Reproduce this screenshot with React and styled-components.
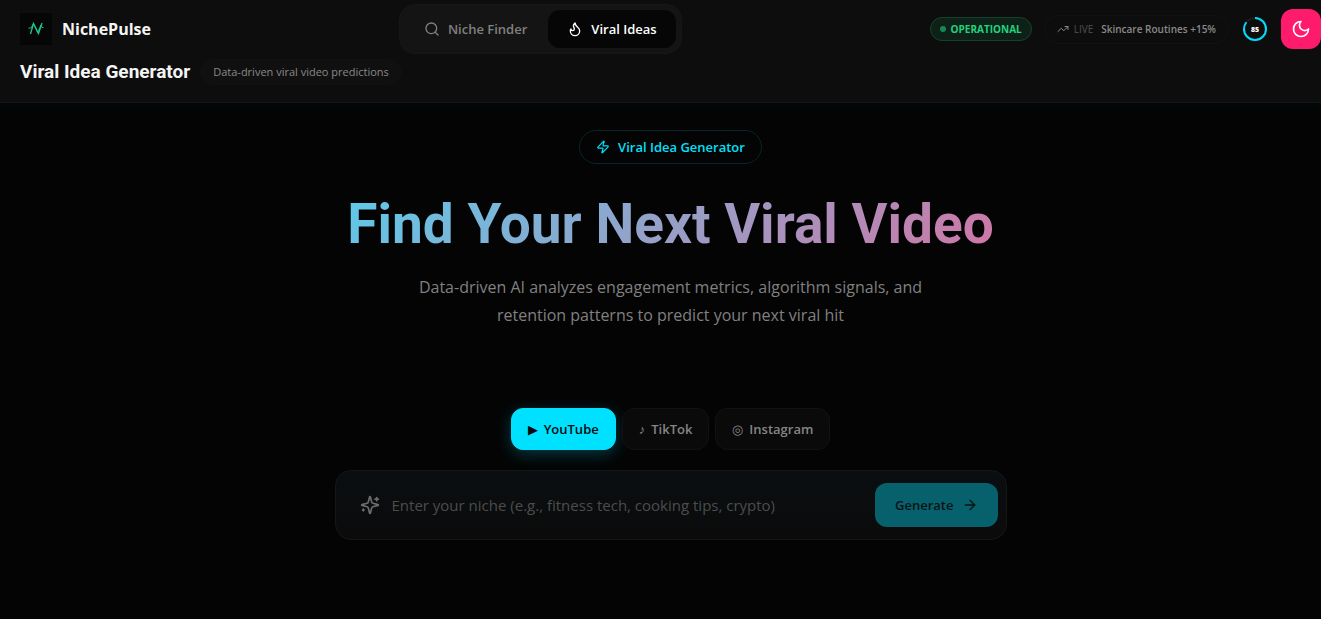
import React, { useState } from "react";
import styled, { createGlobalStyle } from "styled-components";
import { ArrowRight, Search, TrendingUp, Zap } from "lucide-react";

const sans = `"Open Sans", "Noto Sans", sans-serif`;
const display = `Roboto, "Liberation Sans", sans-serif`;

const GlobalStyle = createGlobalStyle`
  * { box-sizing: border-box; }
  body {
    margin: 0;
    background: #040404;
    color: #f5f5f5;
    font-family: ${sans};
    font-size: 13px;
  }
  button, input { font-family: inherit; }
`;

const Header = styled.header`
  background: #0d0d0d;
  border-bottom: 1px solid #141414;
  padding: 4px 0 16px 20px;
`;
const TopBar = styled.div`
  display: flex;
  align-items: center;
  justify-content: space-between;
  min-height: 50px;
`;
const Brand = styled.a`
  display: flex;
  align-items: center;
  gap: 10px;
  color: #f5f5f5;
  font-size: 16px;
  font-weight: 700;
  text-decoration: none;
`;
const LogoBox = styled.span`
  display: grid;
  place-items: center;
  width: 32px;
  height: 32px;
  background: #060606;
`;

const Tabs = styled.nav`
  display: flex;
  gap: 2px;
  padding: 5px;
  background: #141414;
  border: 1px solid #171717;
  border-radius: 16px;
`;
const Tab = styled.button`
  display: flex;
  align-items: center;
  gap: 8px;
  height: 38px;
  padding: 0 19px;
  border: 0;
  border-radius: 12px;
  background: ${p => (p.$active ? "#060606" : "transparent")};
  color: ${p => (p.$active ? "#ffffff" : "#808080")};
  font-size: 13px;
  font-weight: 600;
  cursor: pointer;
`;

const Status = styled.div`
  display: flex;
  align-items: center;
  gap: 12px;
`;
const Operational = styled.span`
  display: flex;
  align-items: center;
  gap: 5px;
  height: 24px;
  padding: 0 9px;
  border: 1px solid #14432c;
  border-radius: 12px;
  background: #0e2119;
  color: #22d37c;
  font-size: 10px;
  font-weight: 700;
`;
const Dot = styled.span`
  width: 6px;
  height: 6px;
  border-radius: 50%;
  background: #198754;
`;
const Ticker = styled.div`
  display: flex;
  align-items: center;
  gap: 5px;
  height: 29px;
  padding: 0 12px;
  border: 1px solid #121212;
  border-radius: 15px;
  color: #8a8a8a;
  font-size: 10px;
  font-weight: 600;
`;
const Live = styled.span`
  margin-right: 3px;
  color: #505050;
  font-weight: 400;
`;
const Score = styled.svg`
  display: block;
  margin: 0 2px;
`;
const ThemeButton = styled.button`
  display: grid;
  place-items: center;
  width: 40px;
  height: 40px;
  padding: 0;
  border: 0;
  border-radius: 12px;
  background: #ff1b6b;
  color: #ffffff;
  cursor: pointer;
`;

const TitleBar = styled.div`
  display: flex;
  align-items: center;
  gap: 10px;
  margin-top: 4px;
`;
const PageTitle = styled.h2`
  margin: 0;
  font-family: ${display};
  font-size: 19px;
  font-weight: 700;
  line-height: 28px;
`;
const Subtitle = styled.span`
  padding: 0 12px;
  border: 1px solid #111111;
  border-radius: 14px;
  background: #101010;
  color: #8a8a8a;
  font-size: 11px;
  line-height: 24px;
`;

const Main = styled.main`
  display: flex;
  flex-direction: column;
  align-items: center;
  padding: 27px 0 40px 20px;
  background: linear-gradient(180deg, #020708 0, #040404 12px);
`;
const Badge = styled.span`
  display: flex;
  align-items: center;
  gap: 8px;
  height: 34px;
  padding: 0 16px;
  border: 1px solid #042629;
  border-radius: 17px;
  color: #00e0fb;
  font-size: 13px;
  font-weight: 600;
`;
const Headline = styled.h1`
  margin: 29px 0 0;
  background: linear-gradient(135deg, #5fc9e8 0%, #cf76a6 100%);
  background-clip: text;
  -webkit-background-clip: text;
  color: transparent;
  font-family: ${display};
  font-size: 55px;
  font-weight: 700;
  line-height: 62px;
  text-align: center;
`;
const Lead = styled.p`
  max-width: 536px;
  margin: 18px 0 0;
  color: #808080;
  font-size: 16px;
  line-height: 28px;
  text-align: center;
`;
const Platforms = styled.div`
  display: flex;
  gap: 6px;
  margin-top: 79px;
`;
const Platform = styled.button`
  display: flex;
  align-items: center;
  gap: 6px;
  height: 42px;
  padding: 0 16px;
  border: 1px solid ${p => (p.$active ? "#00e0ff" : "#121212")};
  border-radius: 12px;
  background: ${p => (p.$active ? "#00e0ff" : "#0a0a0a")};
  box-shadow: ${p => (p.$active ? "0 4px 16px rgba(0, 224, 255, 0.25)" : "none")};
  color: ${p => (p.$active ? "#0a0a0a" : "#858585")};
  font-size: 13px;
  font-weight: 600;
  cursor: pointer;
`;
const Glyph = styled.span`
  font-weight: 400;
`;
const SearchCard = styled.form`
  display: flex;
  align-items: center;
  gap: 12px;
  width: 100%;
  max-width: 672px;
  margin-top: 20px;
  padding: 12px 8px 12px 24px;
  border: 1px solid #151717;
  border-radius: 16px;
  background: linear-gradient(180deg, #0a0e10, #0b0b0b);
  color: #6c6e6e;
`;
const NicheInput = styled.input`
  flex: 1;
  min-width: 0;
  padding: 0;
  border: 0;
  outline: 0;
  background: transparent;
  color: #f5f5f5;
  font-size: 15px;
  line-height: 24px;

  &::placeholder {
    color: #4b4d4d;
    opacity: 1;
  }
`;
const Generate = styled.button`
  display: flex;
  align-items: center;
  gap: 8px;
  height: 44px;
  padding: 0 20px;
  border: 0;
  border-radius: 12px;
  background: #07616d;
  color: #071315;
  font-size: 13px;
  font-weight: 600;
`;

const platforms = [
  { name: "YouTube", glyph: "▶" },
  { name: "TikTok", glyph: "♪" },
  { name: "Instagram", glyph: "◎" }
];

const Icon = ({ size, children }) => (
  <svg
    width={size}
    height={size}
    viewBox="0 0 24 24"
    fill="none"
    stroke="currentColor"
    strokeWidth="2"
    strokeLinecap="round"
    strokeLinejoin="round"
    aria-hidden="true"
  >
    {children}
  </svg>
);

const FlameIcon = () => (
  <Icon size={16}>
    <path d="M8.5 14.5A2.5 2.5 0 0 0 11 12c0-1.38-.5-2-1-3-1.072-2.143-.224-4.054 2-6 .5 2.5 2 4.9 4 6.5 2 1.6 3 3.5 3 5.5a7 7 0 1 1-14 0c0-1.153.433-2.294 1-3a2.5 2.5 0 0 0 2.5 2.5z" />
  </Icon>
);

const MoonIcon = () => (
  <Icon size={20}>
    <path d="M12 3a6 6 0 0 0 9 9 9 9 0 1 1-9-9Z" />
  </Icon>
);

const SparklesIcon = () => (
  <Icon size={20}>
    <path d="M9.937 15.5A2 2 0 0 0 8.5 14.063l-6.135-1.582a.5.5 0 0 1 0-.962L8.5 9.936A2 2 0 0 0 9.937 8.5l1.582-6.135a.5.5 0 0 1 .963 0L14.063 8.5A2 2 0 0 0 15.5 9.937l6.135 1.581a.5.5 0 0 1 0 .964L15.5 14.063a2 2 0 0 0-1.437 1.437l-1.582 6.135a.5.5 0 0 1-.963 0z" />
    <path d="M20 3v4M22 5h-4M4 17v2M5 18H3" />
  </Icon>
);

const Logo = () => (
  <LogoBox>
    <svg width="16" height="16" viewBox="0 0 16 16" fill="none">
      <path
        d="M0.500 7H3L5.500 2.500L9.500 11.500L13 4L14 6.500H15.500"
        stroke="#12b886"
        strokeWidth="1"
      />
      <path
        d="M2.500 13L5.500 2.500L10.500 12.500L14 2"
        stroke="#19c98b"
        strokeWidth="1.300"
      />
    </svg>
  </LogoBox>
);

const ScoreRing = ({ value }) => {
  const length = 2 * Math.PI * 11;
  return (
    <Score width="24" height="24" viewBox="0 0 24 24">
      <circle cx="12" cy="12" r="11" fill="none" stroke="#1c1c1c" strokeWidth="2" />
      <circle
        cx="12"
        cy="12"
        r="11"
        fill="none"
        stroke="#00dcfa"
        strokeWidth="2"
        strokeDasharray={`${length * value / 100} ${length}`}
        transform="rotate(-90 12 12)"
      />
      <text
        x="12"
        y="15"
        textAnchor="middle"
        fill="#ffffff"
        fontSize="7"
        fontWeight="800"
      >
        {value}
      </text>
    </Score>
  );
};

const App = () => {
  const [tab, setTab] = useState("ideas");
  const [platform, setPlatform] = useState("YouTube");
  const [niche, setNiche] = useState("");

  return (
    <>
      <GlobalStyle />
      <Header>
        <TopBar>
          <Brand href="#">
            <Logo />
            NichePulse
          </Brand>
          <Tabs>
            <Tab $active={tab === "finder"} onClick={() => setTab("finder")}>
              <Search size={16} />
              Niche Finder
            </Tab>
            <Tab $active={tab === "ideas"} onClick={() => setTab("ideas")}>
              <FlameIcon />
              Viral Ideas
            </Tab>
          </Tabs>
          <Status>
            <Operational>
              <Dot />
              OPERATIONAL
            </Operational>
            <Ticker>
              <TrendingUp size={12} />
              <Live>LIVE</Live>
              Skincare Routines +15%
            </Ticker>
            <ScoreRing value={85} />
            <ThemeButton aria-label="Toggle theme">
              <MoonIcon />
            </ThemeButton>
          </Status>
        </TopBar>
        <TitleBar>
          <PageTitle>Viral Idea Generator</PageTitle>
          <Subtitle>Data-driven viral video predictions</Subtitle>
        </TitleBar>
      </Header>
      <Main>
        <Badge>
          <Zap size={14} />
          Viral Idea Generator
        </Badge>
        <Headline>Find Your Next Viral Video</Headline>
        <Lead>
          Data-driven AI analyzes engagement metrics, algorithm signals, and
          retention patterns to predict your next viral hit
        </Lead>
        <Platforms>
          {platforms.map(p => (
            <Platform
              key={p.name}
              type="button"
              $active={platform === p.name}
              onClick={() => setPlatform(p.name)}
            >
              <Glyph aria-hidden="true">{p.glyph}</Glyph>
              {p.name}
            </Platform>
          ))}
        </Platforms>
        <SearchCard onSubmit={e => e.preventDefault()}>
          <SparklesIcon />
          <NicheInput
            aria-label="Niche"
            value={niche}
            onChange={e => setNiche(e.target.value)}
            placeholder="Enter your niche (e.g., fitness tech, cooking tips, crypto)"
          />
          <Generate type="submit" disabled={!niche}>
            Generate
            <ArrowRight size={16} />
          </Generate>
        </SearchCard>
      </Main>
    </>
  );
};

export default App;
